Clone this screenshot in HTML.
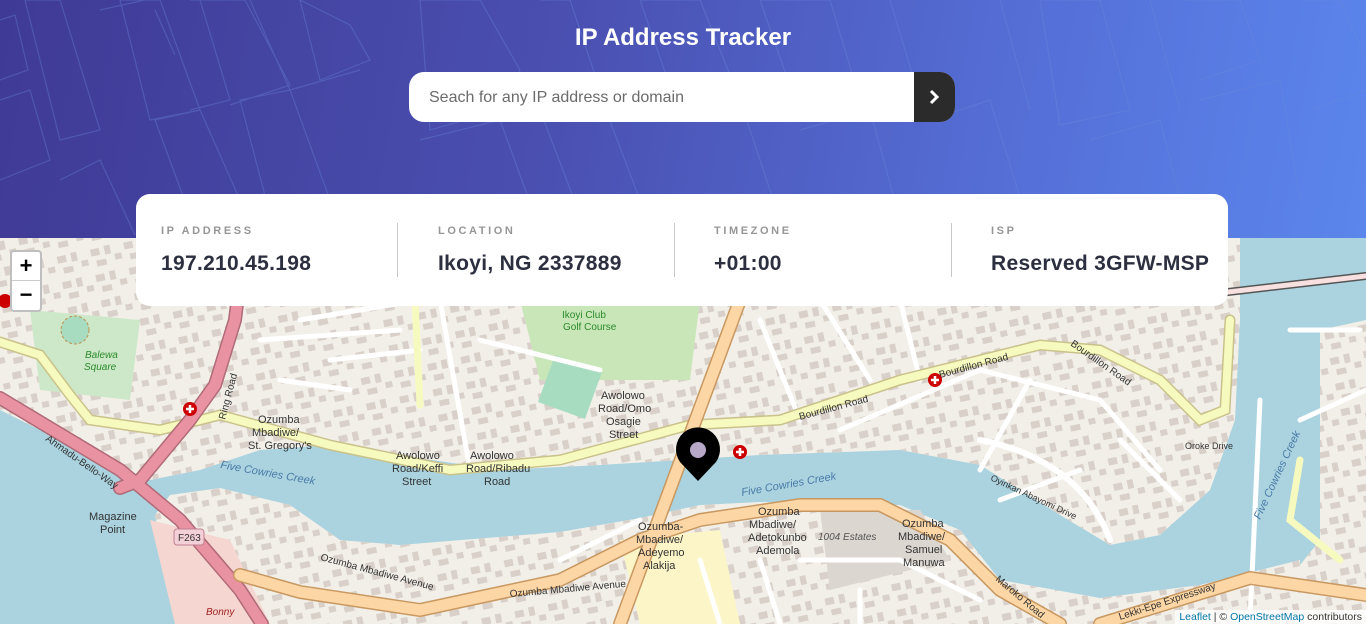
<!DOCTYPE html>
<html><head><meta charset="utf-8">
<style>
*{margin:0;padding:0;box-sizing:border-box}
body{width:1366px;height:624px;overflow:hidden;position:relative;font-family:"Liberation Sans",sans-serif;background:#f2efe9}
#map{position:absolute;left:0;top:0}
header{position:absolute;left:0;top:0;width:1366px;height:238px;background:linear-gradient(100deg,#3f3a95 0%,#4a4fb0 40%,#5570d8 75%,#5b86ec 100%);overflow:hidden}
h1{position:absolute;top:24px;width:100%;text-align:center;color:#fff;font-size:24px;font-weight:bold}
.search{position:absolute;left:409px;top:72px;width:546px;height:50px;background:#fff;border-radius:15px;overflow:hidden}
.search span{position:absolute;left:20px;top:17px;font-size:16px;color:#6b6b6b}
.search .btn{position:absolute;right:0;top:0;width:41px;height:50px;background:#2b2b2b}
.card{position:absolute;left:136px;top:194px;width:1092px;height:112px;background:#fff;border-radius:14px}
.col{position:absolute;top:31px}
.lab{font-size:11px;font-weight:bold;letter-spacing:2.6px;color:#969696}
.val{margin-top:15px;font-size:21px;font-weight:bold;color:#2c2f3f;letter-spacing:.3px}
.div{position:absolute;top:29px;width:1px;height:54px;background:#c8c8c8}
.zoom{position:absolute;left:10px;top:250px;width:32px;height:62px;background:#fff;border:2px solid rgba(0,0,0,.25);border-radius:4px}
.zoom div{height:29px;text-align:center;font-size:22px;line-height:28px;color:#000;font-weight:bold}
.zoom div:first-child{border-bottom:1px solid #ccc}
.attr{position:absolute;right:0;bottom:0;background:rgba(255,255,255,.8);font-size:10.5px;padding:1px 4px;color:#333}
.attr b{color:#0078a8;font-weight:normal}
</style></head><body>
<svg id="map" width="1366" height="624" viewBox="0 0 1366 624" font-family="Liberation Sans, sans-serif">
<defs>
<pattern id="bld" width="34" height="26" patternUnits="userSpaceOnUse" patternTransform="rotate(-12)">
<rect x="2" y="3" width="9" height="7" fill="#d9d0c9"/><rect x="16" y="2" width="6" height="9" fill="#d9d0c9"/><rect x="25" y="12" width="7" height="6" fill="#d9d0c9"/><rect x="6" y="15" width="10" height="6" fill="#d9d0c9"/>
</pattern>
</defs>
<rect width="1366" height="624" fill="#aad3df"/>
<g id="land">
<path d="M0,238 L1240,238 L1240,320 L1235,420 L1210,490 L1160,535 L1110,545 L1060,515 L980,465 L900,450 L760,455 L680,460 L600,465 L500,470 L330,445 L260,450 L200,470 L150,480 L120,470 L60,440 L0,410 Z" fill="#f2efe9"/>
<path d="M1320,330 L1366,320 L1366,624 L1280,624 L1300,565 L1320,540 Z" fill="#f2efe9"/>
<path d="M155,515 L170,495 L220,488 L290,505 L340,540 L400,545 L560,532 L640,518 L700,505 L760,502 L900,505 L960,530 L1000,580 L1100,598 L1200,585 L1300,560 L1300,624 L175,624 Z" fill="#f2efe9"/>
</g>
<g fill="url(#bld)">
<path d="M0,238 L1240,238 L1240,320 L1235,420 L1210,490 L1160,535 L1110,545 L1060,515 L980,465 L900,450 L760,455 L680,460 L600,465 L500,470 L330,445 L260,450 L200,470 L150,480 L120,470 L60,440 L0,410 Z"/>
<path d="M1320,330 L1366,320 L1366,624 L1280,624 L1300,565 L1320,540 Z"/>
<path d="M155,515 L170,495 L220,488 L290,505 L340,540 L400,545 L560,532 L640,518 L700,505 L760,502 L900,505 L960,530 L1000,580 L1100,598 L1200,585 L1300,560 L1300,624 L175,624 Z"/>
</g>
<path d="M150,520 L230,540 L270,624 L175,624 Z" fill="#f5d6d0"/>
<path d="M520,300 L700,300 L690,380 L540,380 Z" fill="#c8e6b8"/>
<rect x="545" y="362" width="50" height="50" fill="#a8dcc0" transform="rotate(20 570 387)"/>
<path d="M30,310 L140,320 L130,400 L40,390 Z" fill="#cde8c8"/>
<circle cx="75" cy="330" r="14" fill="#a8dcc0" stroke="#c09050" stroke-dasharray="3 2"/>
<path d="M620,540 L720,530 L740,624 L640,624 Z" fill="#fbf5c8"/>
<path d="M820,510 L920,510 L950,560 L830,590 Z" fill="#dcd6d0"/>
<g stroke="#fff" stroke-width="5" fill="none" stroke-linecap="round">
<path d="M300,320 L420,300 M260,340 L400,330 M330,360 L420,350 M280,380 L350,390 M440,300 L470,470 M480,340 L600,370 M760,320 L800,420 M820,300 L870,380 M900,300 L920,380 M840,430 L980,370 L1100,400 L1160,470 M1030,380 L980,470 M1120,440 L1180,500 M1000,500 L1080,470 M560,560 L640,520 M700,560 L720,624 M760,560 L780,624 M800,560 L900,560 L980,600 M860,590 L860,624 M1250,620 L1260,400 M1290,330 L1360,330 M1300,420 L1366,390"/>
<path d="M980,440 Q1080,460 1110,540" stroke-width="6"/>
</g>
<g fill="none" stroke-linecap="round">
<path d="M0,342 L40,355 L70,395 L90,420 L160,430 L220,415 L330,445 L450,470 L560,460 L690,425 L780,420 L900,380 L980,360 L1040,345 L1100,350 L1160,380 L1200,420 L1225,410 L1230,320" stroke="#c9c28a" stroke-width="11"/>
<path d="M0,342 L40,355 L70,395 L90,420 L160,430 L220,415 L330,445 L450,470 L560,460 L690,425 L780,420 L900,380 L980,360 L1040,345 L1100,350 L1160,380 L1200,420 L1225,410 L1230,320" stroke="#f7fabf" stroke-width="8"/>
<path d="M415,300 L420,405 M1300,460 L1290,520 L1340,560" stroke="#f7fabf" stroke-width="7"/>
<path d="M0,398 L120,470 L180,520 L240,590 L262,624 M245,238 L235,320 L215,385 L190,420 L140,480 L120,488" stroke="#b06a78" stroke-width="14"/>
<path d="M0,398 L120,470 L180,520 L240,590 L262,624 M245,238 L235,320 L215,385 L190,420 L140,480 L120,488" stroke="#e892a2" stroke-width="11"/>
<path d="M740,300 L620,624 M240,575 L300,592 L420,610 L560,580 L640,540 L700,520 L800,505 L880,505 L950,540 L1000,590 L1060,624 M1100,624 L1250,578 L1366,595" stroke="#c89860" stroke-width="14"/>
<path d="M740,300 L620,624 M240,575 L300,592 L420,610 L560,580 L640,540 L700,520 L800,505 L880,505 L950,540 L1000,590 L1060,624 M1100,624 L1250,578 L1366,595" stroke="#fcd6a4" stroke-width="11"/>
<path d="M1228,292 L1366,276" stroke="#555" stroke-width="8"/>
<path d="M1228,292 L1366,276" stroke="#f8e0e0" stroke-width="5"/>
</g>
<g font-size="9.5" fill="#333">
<text x="85" y="358" fill="#2a8a2a" font-style="italic" font-size="10">Balewa</text>
<text x="84" y="370" fill="#2a8a2a" font-style="italic" font-size="10">Square</text>
<text x="258" y="423" font-size="11">Ozumba</text><text x="252" y="436" font-size="11">Mbadiwe/</text><text x="248" y="449" font-size="11">St. Gregory's</text>
<text x="396" y="459" font-size="11">Awolowo</text><text x="392" y="472" font-size="11">Road/Keffi</text><text x="402" y="485" font-size="11">Street</text>
<text x="470" y="459" font-size="11">Awolowo</text><text x="466" y="472" font-size="11">Road/Ribadu</text><text x="484" y="485" font-size="11">Road</text>
<text x="601" y="399" font-size="11">Awolowo</text><text x="598" y="412" font-size="11">Road/Omo</text><text x="606" y="425" font-size="11">Osagie</text><text x="609" y="438" font-size="11">Street</text>
<text x="89" y="520" font-size="11">Magazine</text><text x="100" y="533" font-size="11">Point</text>
<text x="638" y="530" font-size="11">Ozumba-</text><text x="636" y="543" font-size="11">Mbadiwe/</text><text x="638" y="556" font-size="11">Adeyemo</text><text x="643" y="569" font-size="11">Alakija</text>
<text x="758" y="515" font-size="11">Ozumba</text><text x="749" y="528" font-size="11">Mbadiwe/</text><text x="748" y="541" font-size="11">Adetokunbo</text><text x="756" y="554" font-size="11">Ademola</text>
<text x="902" y="527" font-size="11">Ozumba</text><text x="898" y="540" font-size="11">Mbadiwe/</text><text x="905" y="553" font-size="11">Samuel</text><text x="903" y="566" font-size="11">Manuwa</text>
<text x="818" y="540" fill="#555" font-style="italic" font-size="10">1004 Estates</text>
<text x="562" y="318" fill="#2a8a2a" font-size="10">Ikoyi Club</text><text x="563" y="330" fill="#2a8a2a" font-size="10">Golf Course</text>
<text x="1185" y="449" font-size="9">Oroke Drive</text>
<text x="206" y="615" fill="#a02020" font-style="italic" font-size="10">Bonny</text>
<g fill="#4a7aa8" font-style="italic" font-size="11"><text x="220" y="468" transform="rotate(10 220 468)">Five Cowries Creek</text><text x="742" y="496" transform="rotate(-10 742 496)">Five Cowries Creek</text><text x="1260" y="520" transform="rotate(-65 1260 520)">Five Cowries Creek</text></g>
<text x="800" y="420" font-size="10" transform="rotate(-15 800 420)">Bourdillon Road</text>
<text x="940" y="378" font-size="10" transform="rotate(-15 940 378)">Bourdillon Road</text>
<text x="1070" y="345" font-size="10" transform="rotate(35 1070 345)">Bourdillon Road</text>
<text x="320" y="560" font-size="10" transform="rotate(15 320 560)">Ozumba Mbadiwe Avenue</text>
<text x="510" y="597" font-size="10" transform="rotate(-5 510 597)">Ozumba Mbadiwe Avenue</text>
<text x="1120" y="620" font-size="10" transform="rotate(-18 1120 620)">Lekki-Epe Expressway</text>
<text x="45" y="440" font-size="10" transform="rotate(35 45 440)">Ahmadu-Bello-Way</text>
<text x="225" y="420" font-size="10" transform="rotate(-75 225 420)">Ring Road</text>
<text x="995" y="580" font-size="10" transform="rotate(40 995 580)">Maroko Road</text>
<text x="990" y="480" font-size="9" transform="rotate(25 990 480)">Oyinkan Abayomi Drive</text>
</g>
<rect x="174" y="529" width="30" height="16" rx="3" fill="#f3d0d8" stroke="#c08090"/><text x="178" y="541" font-size="10" fill="#333">F263</text>
<g fill="#c00"><circle cx="190" cy="409" r="7"/><circle cx="740" cy="452" r="7"/><circle cx="935" cy="380" r="7"/><circle cx="5" cy="301" r="7"/></g>
<g stroke="#fff" stroke-width="2.5"><path d="M186,409h8M190,405v8M736,452h8M740,448v8M931,380h8M935,376v8"/></g>
<path d="M698,481 L680,462 A22,22 0 1,1 716,462 Z" fill="#000"/>
<circle cx="698" cy="450" r="8" fill="#b8a8c8"/>
</svg>
<header>
<svg width="1366" height="238" style="position:absolute;left:0;top:0" fill="none" stroke="#6a8ad8" stroke-width="1.2" opacity=".35">
<path d="M0,20 L15,15 L28,70 L0,80 M0,100 L30,90 L50,160 L0,180 M25,0 L60,0 L100,130 L60,140 Z M60,180 L100,160 L135,235 M120,0 L160,0 L200,110 L150,120 Z M155,10 L175,55 M200,0 L230,100 L190,110 M145,0 L100,10 M155,120 L200,110 L240,200 L190,215 Z M190,0 L245,0 L290,85 L230,105 M300,0 L350,25 L370,60 L320,80 Z M250,0 L290,90 L360,70 M240,100 L290,90 L330,200 L270,215 Z M280,210 L330,200 L340,238 M420,0 L480,0 L520,70 L500,110 L430,130 Z M420,140 L500,120 L540,230 M540,0 L570,0 L600,90 L560,100 M540,110 L600,95 L640,200 L580,215 Z M640,0 L700,0 L740,100 L680,115 Z M660,120 L740,100 L780,220 M760,0 L830,0 L860,100 L800,115 Z M800,130 L870,110 L900,220 M890,0 L920,100 M1000,0 L1030,110 M930,120 L990,100 L1030,230 M1040,0 L1100,0 L1130,110 L1060,125 Z M1090,140 L1160,120 L1190,238 M1150,0 L1180,110 M1180,0 L1240,0 L1260,60 L1200,80 M1200,100 L1280,80 L1300,200 M1300,0 L1340,0 L1366,60 M1310,110 L1366,90"/>
</svg>
<h1>IP Address Tracker</h1>
<div class="search"><span>Seach for any IP address or domain</span><div class="btn"><svg width="41" height="50"><path d="M17,19 L23,25 L17,31" stroke="#fff" stroke-width="3" fill="none"/></svg></div></div>
</header>
<div class="card">
<div class="col" style="left:25px"><div class="lab">IP ADDRESS</div><div class="val">197.210.45.198</div></div>
<div class="div" style="left:261px"></div>
<div class="col" style="left:302px"><div class="lab">LOCATION</div><div class="val">Ikoyi, NG 2337889</div></div>
<div class="div" style="left:538px"></div>
<div class="col" style="left:578px"><div class="lab">TIMEZONE</div><div class="val">+01:00</div></div>
<div class="div" style="left:815px"></div>
<div class="col" style="left:855px"><div class="lab">ISP</div><div class="val">Reserved 3GFW-MSP</div></div>
</div>
<div class="zoom"><div>+</div><div>−</div></div>
<div class="attr"><b>Leaflet</b> | © <b>OpenStreetMap</b> contributors</div>
</body></html>
